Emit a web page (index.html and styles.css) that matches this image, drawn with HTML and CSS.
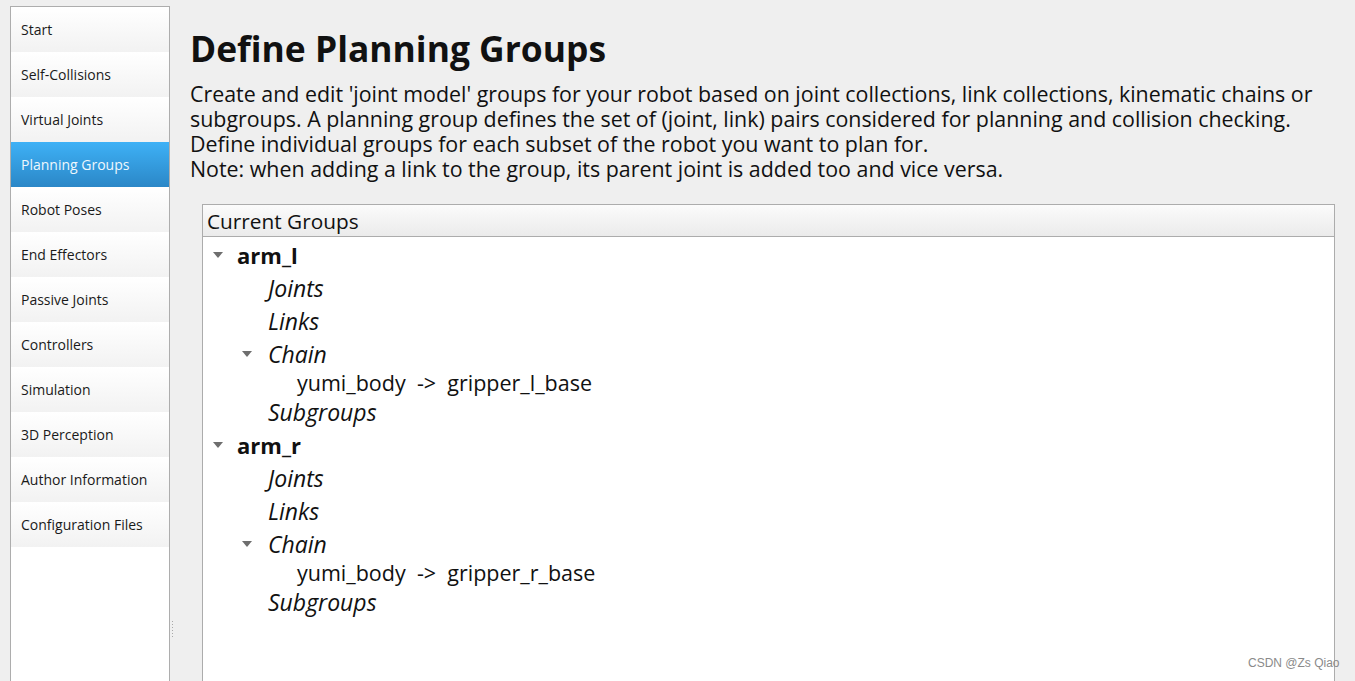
FILE: index.html
```html
<!DOCTYPE html>
<html>
<head>
<meta charset="utf-8">
<link rel="stylesheet" href="styles.css">
</head>
<body>
<div class="app">
  <nav class="sidebar">
    <div class="item">Start</div>
    <div class="item">Self-Collisions</div>
    <div class="item">Virtual Joints</div>
    <div class="item selected">Planning Groups</div>
    <div class="item">Robot Poses</div>
    <div class="item">End Effectors</div>
    <div class="item">Passive Joints</div>
    <div class="item">Controllers</div>
    <div class="item">Simulation</div>
    <div class="item">3D Perception</div>
    <div class="item">Author Information</div>
    <div class="item">Configuration Files</div>
  </nav>
  <div class="splitter"><div class="grip"><span></span><span></span><span></span><span></span><span></span><span></span></div></div>
  <main class="main">
    <h1 class="title">Define Planning Groups</h1>
    <div class="desc">
      <div class="line">Create and edit 'joint model' groups for your robot based on joint collections, link collections, kinematic chains or</div>
      <div class="line">subgroups. A planning group defines the set of (joint, link) pairs considered for planning and collision checking.</div>
      <div class="line">Define individual groups for each subset of the robot you want to plan for.</div>
      <div class="line">Note: when adding a link to the group, its parent joint is added too and vice versa.</div>
    </div>
    <div class="tree">
      <div class="tree-header">Current Groups</div>
      <div class="tree-body">
        <div class="row l0"><span class="arrow"></span><b>arm_l</b></div>
        <div class="row l1"><i>Joints</i></div>
        <div class="row l1"><i>Links</i></div>
        <div class="row l1"><span class="arrow"></span><i>Chain</i></div>
        <div class="row l2 leaf">yumi_body&nbsp; -&gt;&nbsp; gripper_l_base</div>
        <div class="row l1"><i>Subgroups</i></div>
        <div class="row l0"><span class="arrow"></span><b>arm_r</b></div>
        <div class="row l1"><i>Joints</i></div>
        <div class="row l1"><i>Links</i></div>
        <div class="row l1"><span class="arrow"></span><i>Chain</i></div>
        <div class="row l2 leaf">yumi_body&nbsp; -&gt;&nbsp; gripper_r_base</div>
        <div class="row l1"><i>Subgroups</i></div>
      </div>
    </div>
  </main>
</div>
<div class="watermark">CSDN @Zs Qiao</div>
</body>
</html>
```
FILE: styles.css
```css
html, body {
  margin: 0;
  padding: 0;
  height: 100%;
  overflow: hidden;
  background: #efefef;
  font-family: "Open Sans", "Noto Sans", sans-serif;
  color: #111;
}
.app {
  display: flex;
  height: 100%;
}
.sidebar {
  margin: 6px 0 0 10px;
  width: 158px;
  flex: none;
  background: #fff;
  border: 1px solid #adadad;
  border-bottom: none;
}
.item {
  height: 45px;
  box-sizing: border-box;
  padding-left: 10px;
  display: flex;
  align-items: center;
  font-size: 14px;
  color: #1a1a1a;
  background: linear-gradient(#ffffff, #f2f2f2);
}
.item.selected {
  background: linear-gradient(#3eb1f6, #2b87c7);
  color: #eef7fd;
}
.splitter {
  width: 10px;
  flex: none;
  position: relative;
}
.grip {
  position: absolute;
  left: 2px;
  top: 621px;
  display: flex;
  flex-direction: column;
  gap: 2px;
}
.grip span {
  width: 1px;
  height: 1px;
  background: #a8a8a8;
}
.main {
  flex: 1;
  padding-left: 10px;
  padding-right: 20px;
  display: flex;
  flex-direction: column;
  min-height: 0;
}
.title {
  margin: 26px 0 0 0;
  font-size: 35.4px;
  font-weight: 700;
  line-height: 44px;
  color: #111;
}
.desc {
  margin: 11px 0 0 0;
  font-size: 21.4px;
  color: #111;
  white-space: nowrap;
}
.line {
  height: 25px;
  line-height: 25px;
}
.tree {
  margin: 23px 0 0 12px;
  border: 1px solid #acacac;
  border-bottom: none;
  background: #fff;
  flex: 1;
  min-height: 0;
}
.tree-header {
  height: 31px;
  border-bottom: 1px solid #acacac;
  background: linear-gradient(#fbfbfb, #f3f3f3 50%, #ebebeb);
  font-size: 20.8px;
  line-height: 32px;
  padding-left: 4px;
}
.tree-body {
  padding-top: 1px;
}
.row {
  height: 33px;
  display: flex;
  align-items: center;
  font-size: 22px;
  position: relative;
  color: #111;
}
.row i { font-size: 23px; }
.row.leaf {
  height: 25px;
  font-size: 21.5px;
}
.row b { font-weight: 700; }
.l0 { padding-left: 34px; }
.l1 { padding-left: 65px; }
.l2 { padding-left: 94px; }
.arrow {
  position: absolute;
  top: 14px;
  width: 0;
  height: 0;
  border-left: 5px solid transparent;
  border-right: 5px solid transparent;
  border-top: 6px solid #6e6e6e;
}
.l0 .arrow { left: 10px; }
.l1 .arrow { left: 39px; }
.watermark {
  position: absolute;
  left: 1248px;
  top: 656px;
  font-family: "Liberation Sans", Arial, sans-serif;
  font-size: 12px;
  color: #8a8a8a;
}
```
